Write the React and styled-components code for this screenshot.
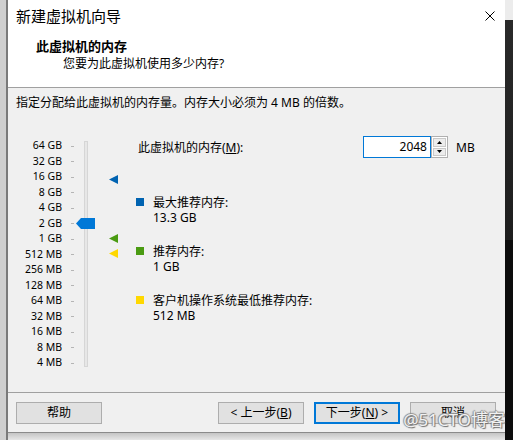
import React from "react";
import styled, { createGlobalStyle } from "styled-components";

const Global = createGlobalStyle`
  html, body { margin: 0; padding: 0; }
  body { font-family: "Noto Sans", "Noto Sans CJK SC", sans-serif; color: #000; }
`;

const FONT = `"Noto Sans", "Noto Sans CJK SC", sans-serif`;

const Page = styled.div`
  position: relative;
  display: flex;
  width: 513px;
  height: 440px;
  overflow: hidden;
  background: #e4e4e4;
`;

const LeftStrip = styled.div`
  width: 6px;
  flex: 0 0 6px;
  background: #cfcfcf;
  border-right: 2px solid #7a7a7a;
`;

const RightStrip = styled.div`
  flex: 1;
  background: linear-gradient(#ececec 0, #ececec 20px, #2a2a2a 20px, #1e1e1e 240px, #0c0c0c 240px);
`;

const Column = styled.div`
  width: 497px;
  flex: 0 0 497px;
  display: flex;
  flex-direction: column;
`;

const Dialog = styled.div`
  box-sizing: border-box;
  height: 433px;
  flex: 0 0 433px;
  display: flex;
  flex-direction: column;
  background: #f0f0f0;
  border-bottom: 1px solid #8a8a8a;
`;

const Below = styled.div`
  flex: 1;
  background: linear-gradient(#c4c4c4, #e6e6e6);
`;

const TitleBar = styled.div`
  height: 32px;
  flex: 0 0 32px;
  background: #fff;
  display: flex;
  align-items: center;
  justify-content: space-between;
  padding: 0 10px 0 8px;
`;

const Title = styled.div`
  font-family: ${FONT};
  font-size: 15px;
  line-height: 18px;
  margin-top: -1px;
`;

const Header = styled.div`
  box-sizing: border-box;
  height: 56px;
  flex: 0 0 56px;
  background: #fff;
  border-bottom: 1px solid #a0a0a0;
  padding: 6px 0 0 28px;
`;

const Heading = styled.div`
  font-family: ${FONT};
  font-size: 13px;
  font-weight: 700;
  line-height: 16px;
`;

const SubHeading = styled.div`
  font-family: ${FONT};
  font-size: 12px;
  line-height: 16px;
  margin-top: 2px;
  padding-left: 27px;
`;

const Body = styled.div`
  height: 304px;
  flex: 0 0 304px;
  box-sizing: border-box;
  padding: 7px 9px 0 8px;
  font-family: ${FONT};
  font-size: 12px;
`;

const Intro = styled.div`
  line-height: 16px;
`;

const ContentRow = styled.div`
  display: flex;
  margin-top: 26px;
`;

const SliderArea = styled.div`
  position: relative;
  width: 120px;
  height: 232px;
`;

const Scale = styled.div`
  display: grid;
  grid-template-columns: 46px 3px;
  column-gap: 9px;
  grid-auto-rows: 15.5px;
  padding-top: 1.25px;
`;

const ScaleLabel = styled.div`
  font-family: "Noto Sans", sans-serif;
  font-size: 10.5px;
  line-height: 15.5px;
  text-align: right;
  white-space: nowrap;
`;

const Tick = styled.div`
  align-self: center;
  width: 3px;
  height: 1px;
  background: #b5b5b5;
`;

const Track = styled.div`
  position: absolute;
  left: 68px;
  top: 4px;
  width: 4px;
  height: 226px;
  box-sizing: border-box;
  background: #e7e7e7;
  border: 1px solid #d6d6d6;
`;

const Thumb = styled.svg`
  position: absolute;
  left: 60px;
  top: 81px;
`;

const Marker = styled.svg`
  position: absolute;
  left: 93px;
  top: ${(p) => p.$top}px;
`;

const Panel = styled.div`
  flex: 1;
  display: flex;
  flex-direction: column;
`;

const MemRow = styled.div`
  display: flex;
  align-items: center;
  height: 21px;
`;

const MemLabel = styled.div`
  box-sizing: border-box;
  width: 227px;
  padding-left: 2px;
  line-height: 16px;
  white-space: nowrap;
`;

const NumInput = styled.div`
  box-sizing: border-box;
  width: 68px;
  height: 22px;
  margin-top: -1px;
  border: 1px solid #0078d7;
  background: #fff;
  text-align: right;
  padding-right: 3px;
  line-height: 19px;
  font-family: "Noto Sans", sans-serif;
  font-size: 12px;
`;

const Spin = styled.div`
  box-sizing: border-box;
  width: 17px;
  height: 22px;
  margin-top: -1px;
  border: 1px solid #b0b0b0;
  background: #fff;
  display: flex;
  flex-direction: column;
  padding: 1px;
  gap: 1px;
`;

const SpinBtn = styled.div`
  flex: 1;
  box-sizing: border-box;
  border: 1px solid #c9c9c9;
  background: #ececec;
  display: flex;
  align-items: center;
  justify-content: center;
`;

const Unit = styled.div`
  margin-left: 8px;
  font-family: "Noto Sans", sans-serif;
  line-height: 16px;
`;

const Legend = styled.div`
  display: flex;
  flex-direction: column;
  gap: 19px;
  margin-top: 36.5px;
`;

const LegendItem = styled.div`
  display: grid;
  grid-template-columns: 8px 1fr;
  grid-template-rows: 15px 15px;
  column-gap: 9px;
  line-height: 15px;
`;

const Swatch = styled.div`
  width: 8px;
  height: 8px;
  align-self: center;
  background: ${(p) => p.$color};
`;

const LegendTitle = styled.div`
  line-height: 15px;
  white-space: nowrap;
`;

const Value = styled.div`
  grid-column: 2;
  font-family: "Noto Sans", sans-serif;
  line-height: 15px;
`;

const Footer = styled.div`
  border-top: 1px solid #a0a0a0;
  padding: 9px 9px 8px 8px;
  display: flex;
  gap: 10px;
`;

const Button = styled.div`
  box-sizing: border-box;
  width: 86px;
  height: 22px;
  display: flex;
  align-items: center;
  justify-content: center;
  background: #e1e1e1;
  border: ${(p) => (p.$primary ? "2px solid #0078d7" : "1px solid #adadad")};
  font-family: ${FONT};
  font-size: 12px;
  line-height: 16px;
  white-space: pre;
  margin-left: ${(p) => (p.$push ? "auto" : "0")};
`;

const Watermark = styled.div`
  position: absolute;
  right: 8px;
  top: 410px;
  font-family: "Noto Sans", "Noto Sans CJK SC", sans-serif;
  font-size: 17px;
  line-height: 20px;
  color: #f2f2f2;
  text-shadow: 1px 1px 1px #6a6a6a, -1px 0 1px #8a8a8a, 0 -1px 1px #8a8a8a;
  white-space: nowrap;
`;

const scale = [
  "64 GB", "32 GB", "16 GB", "8 GB", "4 GB", "2 GB", "1 GB",
  "512 MB", "256 MB", "128 MB", "64 MB", "32 MB", "16 MB", "8 MB", "4 MB",
];

const markers = [
  { top: 38, color: "#0063b1" },
  { top: 97, color: "#4a9b12" },
  { top: 112, color: "#ffd800" },
];

const legend = [
  { color: "#0063b1", title: "最大推荐内存:", value: "13.3 GB" },
  { color: "#4a9b12", title: "推荐内存:", value: "1 GB" },
  { color: "#ffd800", title: "客户机操作系统最低推荐内存:", value: "512 MB" },
];

export default function App() {
  return (
    <>
      <Global />
      <Page>
        <LeftStrip />
        <Column>
          <Dialog>
            <TitleBar>
              <Title>新建虚拟机向导</Title>
              <svg width="10" height="10" viewBox="0 0 10 10">
                <path d="M0.5 0.5 L9.5 9.5 M9.5 0.5 L0.5 9.5" stroke="#000" strokeWidth="1" />
              </svg>
            </TitleBar>
            <Header>
              <Heading>此虚拟机的内存</Heading>
              <SubHeading>您要为此虚拟机使用多少内存?</SubHeading>
            </Header>
            <Body>
              <Intro>指定分配给此虚拟机的内存量。内存大小必须为 4 MB 的倍数。</Intro>
              <ContentRow>
                <SliderArea>
                  <Scale>
                    {scale.map((s) => (
                      <React.Fragment key={s}>
                        <ScaleLabel>{s}</ScaleLabel>
                        <Tick />
                      </React.Fragment>
                    ))}
                  </Scale>
                  <Track />
                  <Thumb width="19" height="11" viewBox="0 0 19 11">
                    <polygon points="0,5.5 5,0 19,0 19,11 5,11" fill="#0078d7" />
                  </Thumb>
                  {markers.map((m) => (
                    <Marker key={m.top} $top={m.top} width="9" height="9" viewBox="0 0 9 9">
                      <polygon points="0,4.5 9,0 9,9" fill={m.color} />
                    </Marker>
                  ))}
                </SliderArea>
                <Panel>
                  <MemRow>
                    <MemLabel>
                      此虚拟机的内存(<u>M</u>):
                    </MemLabel>
                    <NumInput>2048</NumInput>
                    <Spin>
                      <SpinBtn>
                        <svg width="5" height="3" viewBox="0 0 5 3">
                          <polygon points="2.5,0 5,3 0,3" fill="#000" />
                        </svg>
                      </SpinBtn>
                      <SpinBtn>
                        <svg width="5" height="3" viewBox="0 0 5 3">
                          <polygon points="0,0 5,0 2.5,3" fill="#000" />
                        </svg>
                      </SpinBtn>
                    </Spin>
                    <Unit>MB</Unit>
                  </MemRow>
                  <Legend>
                    {legend.map((l) => (
                      <LegendItem key={l.title}>
                        <Swatch $color={l.color} />
                        <LegendTitle>{l.title}</LegendTitle>
                        <Value>{l.value}</Value>
                      </LegendItem>
                    ))}
                  </Legend>
                </Panel>
              </ContentRow>
            </Body>
            <Footer>
              <Button>帮助</Button>
              <Button $push>
                {"< 上一步("}<u>B</u>{")"}
              </Button>
              <Button $primary>
                {"下一步("}<u>N</u>{") >"}
              </Button>
              <Button>取消</Button>
            </Footer>
          </Dialog>
          <Below />
        </Column>
        <RightStrip />
        <Watermark>@51CTO博客</Watermark>
      </Page>
    </>
  );
}
